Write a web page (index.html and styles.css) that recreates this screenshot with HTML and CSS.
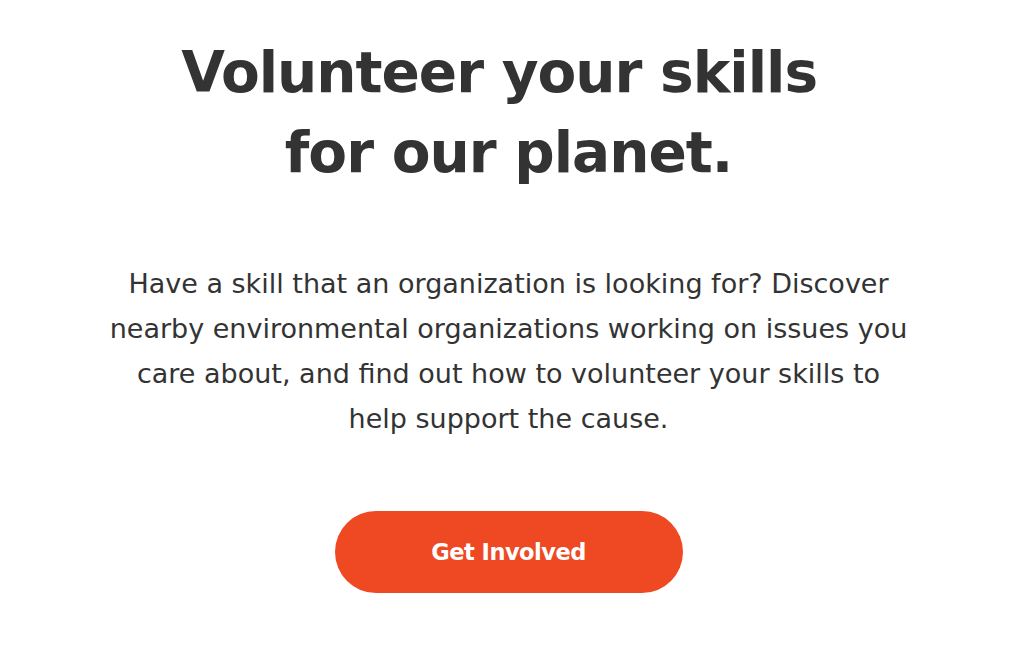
FILE: index.html
```html
<!DOCTYPE html>
<html lang="en">
<head>
<meta charset="utf-8">
<title>Volunteer your skills</title>
<link rel="stylesheet" href="styles.css">
</head>
<body>
<main class="hero">
  <h1 class="hero-title">Volunteer your skills&nbsp;<br>for our planet.</h1>
  <p class="hero-text">Have a skill that an organization is looking for? Discover nearby environmental organizations working on issues you care about, and find out how to volunteer your skills to help support the cause.</p>
  <a class="hero-button" href="#">Get Involved</a>
</main>
</body>
</html>
```
FILE: styles.css
```css
html, body {
  margin: 0;
  padding: 0;
  background: #ffffff;
}
.hero {
  display: flex;
  flex-direction: column;
  align-items: center;
  text-align: center;
  color: #333333;
  padding: 33px 7px 0 0;
}
.hero-title {
  margin: 0;
  font-family: "DejaVu Sans", sans-serif;
  font-weight: 700;
  font-size: 56.5px;
  line-height: 80px;
  letter-spacing: -1px;
  color: #333333;
}
.hero-text {
  margin: 68px 0 0;
  width: 805px;
  font-family: "DejaVu Sans", sans-serif;
  font-size: 27px;
  line-height: 45px;
  color: #333333;
}
.hero-button {
  margin-top: 70px;
  display: flex;
  align-items: center;
  justify-content: center;
  width: 348px;
  height: 82px;
  border-radius: 41px;
  background: #ef4923;
  color: #ffffff;
  text-decoration: none;
  font-family: "DejaVu Sans", sans-serif;
  font-weight: 700;
  font-size: 22.5px;
  letter-spacing: -0.5px;
}
```
